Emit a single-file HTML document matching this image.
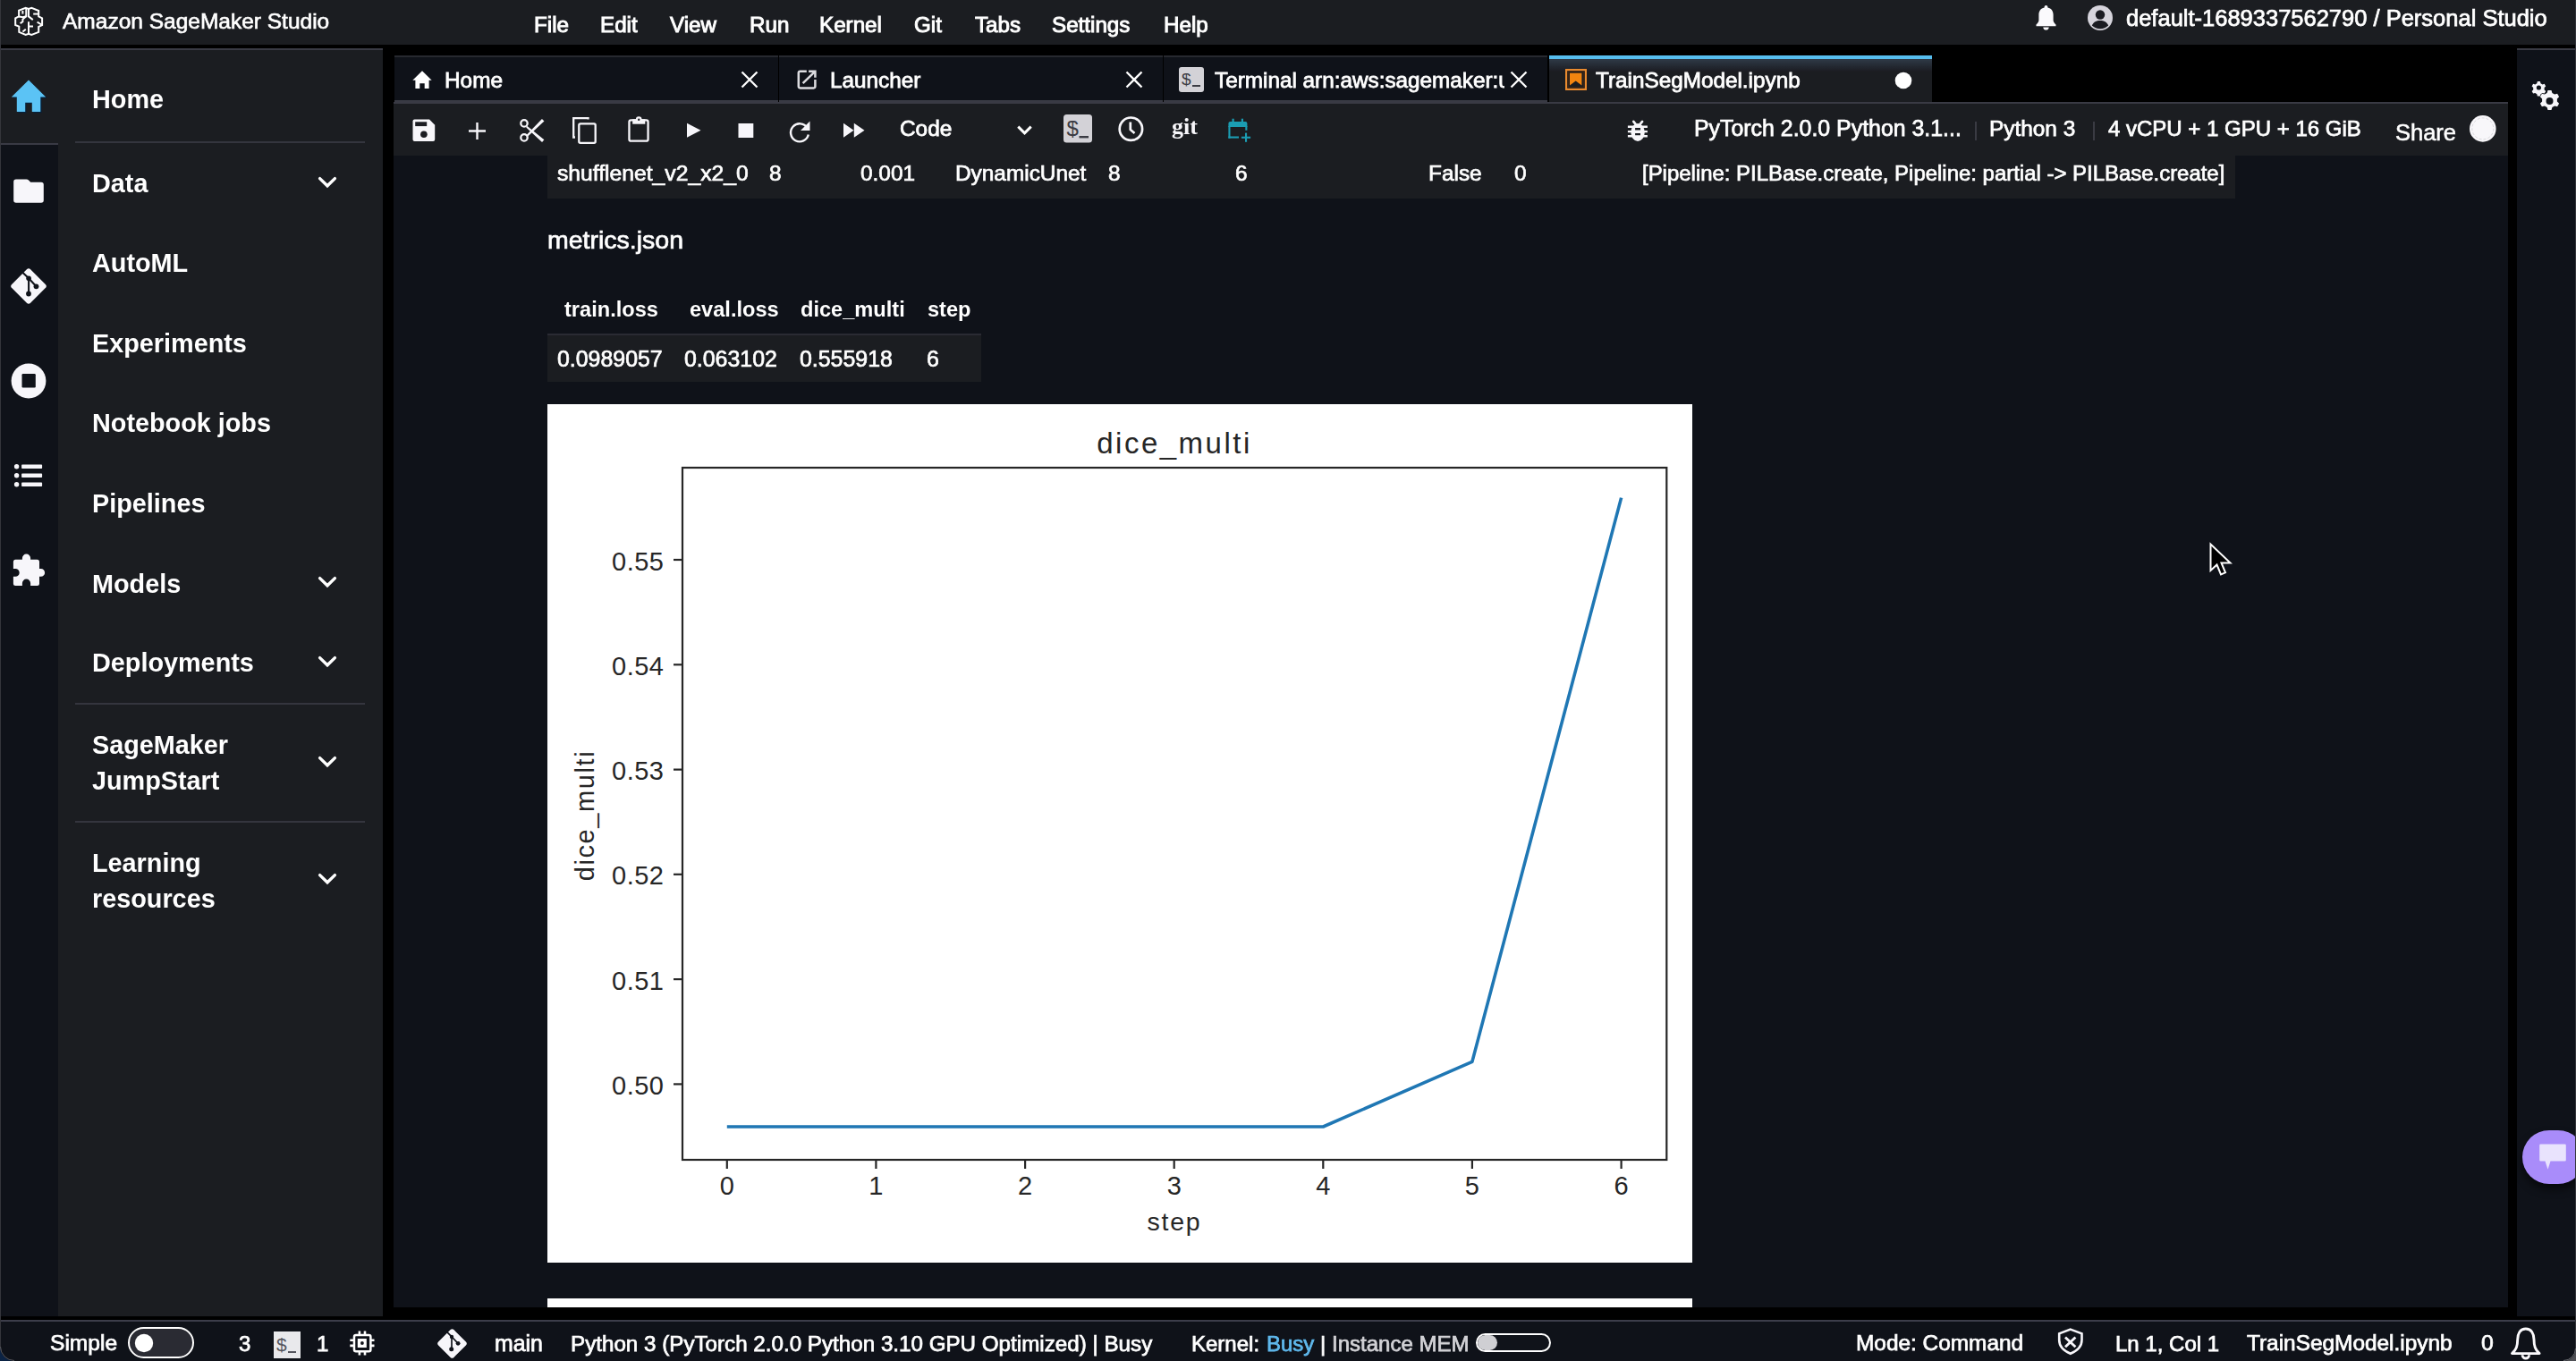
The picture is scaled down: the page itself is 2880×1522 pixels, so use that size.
<!DOCTYPE html>
<html><head><meta charset="utf-8">
<style>
*{box-sizing:border-box;margin:0;padding:0}
html,body{width:2880px;height:1522px;overflow:hidden;background:#000;font-family:"Liberation Sans",sans-serif;color:#fff}
.a{position:absolute}
.t{position:absolute;white-space:pre;line-height:1;will-change:transform}
svg{position:absolute;overflow:visible}
</style></head><body>
<div class="a" style="left:0px;top:0px;width:2880px;height:50px;background:#1b1d21;"></div>
<div class="a" style="left:0px;top:54px;width:65px;height:1418px;background:#0f1219;"></div>
<div class="a" style="left:0px;top:54px;width:65px;height:2px;background:#393a44;"></div>
<div class="a" style="left:0px;top:56px;width:65px;height:104px;background:#1b1d21;"></div>
<div class="a" style="left:0px;top:160px;width:65px;height:2px;background:#393a44;"></div>
<div class="a" style="left:65px;top:54px;width:363px;height:1418px;background:#1b1d21;"></div>
<div class="a" style="left:65px;top:54px;width:363px;height:2px;background:#393a44;"></div>
<div class="a" style="left:441px;top:62px;width:429px;height:50px;background:#0f1219;"></div>
<div class="a" style="left:441px;top:62px;width:429px;height:2px;background:#27292f;"></div>
<div class="a" style="left:441px;top:112px;width:429px;height:2px;background:#393a44;"></div>
<div class="a" style="left:871px;top:62px;width:429px;height:50px;background:#0f1219;"></div>
<div class="a" style="left:871px;top:62px;width:429px;height:2px;background:#27292f;"></div>
<div class="a" style="left:871px;top:112px;width:429px;height:2px;background:#393a44;"></div>
<div class="a" style="left:1301px;top:62px;width:429px;height:50px;background:#0f1219;"></div>
<div class="a" style="left:1301px;top:62px;width:429px;height:2px;background:#27292f;"></div>
<div class="a" style="left:1301px;top:112px;width:429px;height:2px;background:#393a44;"></div>
<div class="a" style="left:1732px;top:62px;width:428px;height:54px;background:#1b1d21;"></div>
<div class="a" style="left:1732px;top:66px;width:428px;height:14px;background:linear-gradient(#2f3a47,#1b1c22)"></div>
<div class="a" style="left:1732px;top:62px;width:428px;height:4px;background:#56bdee;"></div>
<div class="a" style="left:440px;top:114px;width:2364px;height:2px;background:#393a44;"></div>
<div class="a" style="left:440px;top:116px;width:2364px;height:58px;background:#1b1d21;"></div>
<div class="a" style="left:440px;top:174px;width:2364px;height:1288px;background:#0f1219;"></div>
<div class="a" style="left:612px;top:174px;width:1887px;height:48px;background:#1b1d21;"></div>
<div class="a" style="left:612px;top:373px;width:485px;height:54px;background:#1b1d21;"></div>
<div class="a" style="left:612px;top:373px;width:485px;height:2px;background:#2a2b33;"></div>
<div class="a" style="left:612px;top:452px;width:1280px;height:960px;background:#fff;"></div>
<div class="a" style="left:612px;top:1452px;width:1280px;height:10px;background:#fff;"></div>
<div class="a" style="left:2814px;top:54px;width:65px;height:1418px;background:#0f1219;"></div>
<div class="a" style="left:2814px;top:54px;width:65px;height:2px;background:#393a44;"></div>
<div class="a" style="left:0px;top:1476px;width:2880px;height:46px;background:#0f1219;"></div>
<div class="a" style="left:0px;top:1476px;width:2880px;height:2px;background:#3c3d4a;"></div>
<div class="a" style="left:0px;top:0px;width:1px;height:1522px;background:#34353b;z-index:50"></div>
<div class="a" style="left:2879px;top:0px;width:1px;height:1522px;background:#34353b;z-index:50"></div>
<svg style="left:0;top:1506px;z-index:60" width="16" height="16"><path d="M0 0 A16 16 0 0 0 16 16 H0 Z" fill="#0b2344"/><path d="M0.5 0 A15.5 15.5 0 0 0 16 15.5" fill="none" stroke="#55565c" stroke-width="1"/></svg>
<svg style="left:2866px;top:1508px;z-index:60" width="14" height="14"><path d="M14 0 A14 14 0 0 1 0 14 H14 Z" fill="#505156"/><path d="M13.5 0 A13.5 13.5 0 0 1 0 13.5" fill="none" stroke="#6a6b70" stroke-width="1"/></svg>
<svg style="left:14px;top:6px;" width="36" height="36" viewBox="0 0 36 36"><g fill="none" stroke="#fff" stroke-width="2" stroke-linejoin="miter" stroke-linecap="butt">
<path d="M7.1 5.8 L14.7 2.9 L18 4 L21.3 2.9 L29.2 6 V12.4 L33.1 14.3 V22.1 L29.2 23.8 V29.9 L21.3 32.9 L18 31.7 L14.7 32.9 L7.3 29.9 V23.7 L3.2 22 V14.3 L7.1 12.4 Z"/>
<path d="M18 4 V12.4 L22.8 16.1"/>
<path d="M11.4 6 V9.6"/>
<path d="M15.3 3.5 V12.2 L11.4 15.6 V18.3 L8.6 20.2"/>
<path d="M7.1 12.4 L11.6 13.2 L15.3 12.2"/>
<path d="M29.2 9.6 H23.2"/>
<path d="M27.6 18.7 L33.1 22"/>
<path d="M18 18.3 V31.7 M18 23.5 H23"/>
<path d="M11.4 29.6 L14.8 26.7"/>
</g></svg>
<div class="t" style="left:70.0px;top:12.3px;font-size:24.5px;font-weight:400;color:#fff;-webkit-text-stroke:0.65px #fff">Amazon SageMaker Studio</div>
<div class="t" style="left:597.0px;top:15.5px;font-size:24.2px;font-weight:400;color:#fff;-webkit-text-stroke:0.95px #fff">File</div>
<div class="t" style="left:671.0px;top:15.5px;font-size:24.2px;font-weight:400;color:#fff;-webkit-text-stroke:0.95px #fff">Edit</div>
<div class="t" style="left:749.0px;top:15.5px;font-size:24.2px;font-weight:400;color:#fff;-webkit-text-stroke:0.95px #fff">View</div>
<div class="t" style="left:838.0px;top:15.5px;font-size:24.2px;font-weight:400;color:#fff;-webkit-text-stroke:0.95px #fff">Run</div>
<div class="t" style="left:916.0px;top:15.5px;font-size:24.2px;font-weight:400;color:#fff;-webkit-text-stroke:0.95px #fff">Kernel</div>
<div class="t" style="left:1022.0px;top:15.5px;font-size:24.2px;font-weight:400;color:#fff;-webkit-text-stroke:0.95px #fff">Git</div>
<div class="t" style="left:1090.0px;top:15.5px;font-size:24.2px;font-weight:400;color:#fff;-webkit-text-stroke:0.95px #fff">Tabs</div>
<div class="t" style="left:1176.0px;top:15.5px;font-size:24.2px;font-weight:400;color:#fff;-webkit-text-stroke:0.95px #fff">Settings</div>
<div class="t" style="left:1301.0px;top:15.5px;font-size:24.2px;font-weight:400;color:#fff;-webkit-text-stroke:0.95px #fff">Help</div>
<svg style="left:2276px;top:6px;" width="23" height="28" viewBox="0 0 23 28"><path fill="#fbfafd" d="M11.5 0 C12.6 0 13.4 .8 13.4 1.9 V2.6 C17.5 3.4 19.6 6.6 19.6 10.6 V16.5 C19.6 18.3 20.6 20 22.5 21.5 V23.2 H0.5 V21.5 C2.4 20 3.4 18.3 3.4 16.5 V10.6 C3.4 6.6 5.5 3.4 9.6 2.6 V1.9 C9.6 .8 10.4 0 11.5 0 Z M8.3 24.4 H14.7 C14.7 26.2 13.3 27.6 11.5 27.6 C9.7 27.6 8.3 26.2 8.3 24.4 Z"/></svg>
<svg style="left:2334px;top:6px;" width="28" height="28" viewBox="0 0 28 28"><circle cx="14" cy="14" r="14" fill="#d6d4dc"/><circle cx="14" cy="10.5" r="5.2" fill="#1b1c22"/><path fill="#1b1c22" d="M4.8 22.6 C6.5 18.6 9.8 17 14 17 C18.2 17 21.5 18.6 23.2 22.6 C20.8 25 17.6 26.3 14 26.3 C10.4 26.3 7.2 25 4.8 22.6 Z"/></svg>
<div class="t" style="left:2377.0px;top:7.7px;font-size:25.5px;font-weight:400;color:#fff;-webkit-text-stroke:0.75px #fff">default-1689337562790 / Personal Studio</div>
<svg style="left:12px;top:89px;" width="40" height="38" viewBox="0 0 40 38"><path fill="#05213d" transform="translate(1.2,1.2)" d="M20 0.4 L39.2 19.6 H33.3 V35.5 Q33.3 36 32.8 36 H23.8 V25.8 H16.2 V36 H7.2 Q6.8 36 6.8 35.5 V19.6 H0.8 Z"/><path fill="#5bc3f5" d="M20 0.4 L39.2 19.6 H33.3 V35.5 Q33.3 36 32.8 36 H23.8 V25.8 H16.2 V36 H7.2 Q6.8 36 6.8 35.5 V19.6 H0.8 Z"/></svg>
<svg style="left:15px;top:200px;" width="34" height="27" viewBox="0 0 34 27"><path fill="#f7f6fa" d="M3 0.6 H14.5 Q16 0.6 17 1.6 L19.2 3.8 H31 Q33.8 3.8 33.8 6.6 V24 Q33.8 26.8 31 26.8 H3 Q0.2 26.8 0.2 24 V3.4 Q0.2 0.6 3 0.6 Z"/></svg>
<svg style="left:12px;top:300px;" width="40" height="40" viewBox="0 0 40 40"><path fill="#f7f6fa" d="M17.9 1.2 Q20 -0.9 22.1 1.2 L38.8 17.9 Q40.9 20 38.8 22.1 L22.1 38.8 Q20 40.9 17.9 38.8 L1.2 22.1 Q-0.9 20 1.2 17.9 Z"/>
<path d="M12.8 4.3 L20.1 11.3 V28.5 M20.1 11.3 L28.5 20.3" fill="none" stroke="#10131a" stroke-width="2.1"/><g fill="#10131a"><circle cx="20.1" cy="11.3" r="2.8"/><circle cx="20" cy="28.5" r="2.9"/><circle cx="28.5" cy="20.3" r="2.9"/></g></svg>
<svg style="left:12px;top:406px;" width="40" height="40" viewBox="0 0 40 40"><circle cx="20" cy="20" r="19.4" fill="#f7f6fa"/><rect x="12.5" y="12" width="15.3" height="15.5" rx="1.2" fill="#10131a"/></svg>
<svg style="left:15px;top:517px;" width="34" height="30" viewBox="0 0 34 30"><g fill="#f7f6fa"><circle cx="3.6" cy="4.8" r="2.7"/><circle cx="3.6" cy="14.8" r="2.7"/><circle cx="3.6" cy="24.8" r="2.7"/><rect x="9.1" y="2.6" width="23" height="4.5" rx="0.8"/><rect x="9.1" y="12.6" width="23" height="4.5" rx="0.8"/><rect x="9.1" y="22.6" width="23" height="4.5" rx="0.8"/></g></svg>
<svg style="left:14px;top:619px;" width="38" height="37" viewBox="0 0 38 37"><path fill="#f7f6fa" d="M3.4 6.8 H10.9 V5.2 A4.6 4.6 0 0 1 20.1 5.2 V6.8 H27.5 Q30 6.8 30 9.3 V17 H31.7 A4.4 4.4 0 0 1 31.7 25.8 H30 V33.5 Q30 36 27.5 36 H20.1 V33.2 A4.6 4.6 0 0 0 10.9 33.2 V36 H3.4 Q0.9 36 0.9 33.5 V25.8 H3.3 A4.4 4.4 0 0 0 3.3 17 H0.9 V9.3 Q0.9 6.8 3.4 6.8 Z"/></svg>
<div class="t" style="left:102.5px;top:96.6px;font-size:28.8px;font-weight:700;color:#fff;">Home</div>
<div class="t" style="left:102.5px;top:190.6px;font-size:28.8px;font-weight:700;color:#fff;">Data</div>
<div class="t" style="left:102.5px;top:279.6px;font-size:28.8px;font-weight:700;color:#fff;">AutoML</div>
<div class="t" style="left:102.5px;top:369.6px;font-size:28.8px;font-weight:700;color:#fff;">Experiments</div>
<div class="t" style="left:102.5px;top:459.1px;font-size:28.8px;font-weight:700;color:#fff;">Notebook jobs</div>
<div class="t" style="left:102.5px;top:549.2px;font-size:28.8px;font-weight:700;color:#fff;">Pipelines</div>
<div class="t" style="left:102.5px;top:638.6px;font-size:28.8px;font-weight:700;color:#fff;">Models</div>
<div class="t" style="left:102.5px;top:726.6px;font-size:28.8px;font-weight:700;color:#fff;">Deployments</div>
<div class="t" style="left:102.5px;top:819.4px;font-size:28.8px;font-weight:700;color:#fff;">SageMaker</div>
<div class="t" style="left:102.5px;top:858.6px;font-size:28.8px;font-weight:700;color:#fff;">JumpStart</div>
<div class="t" style="left:102.5px;top:951.2px;font-size:28.8px;font-weight:700;color:#fff;">Learning</div>
<div class="t" style="left:102.5px;top:990.6px;font-size:28.8px;font-weight:700;color:#fff;">resources</div>
<svg style="left:355px;top:197px;" width="22" height="14" viewBox="0 0 22 14"><path d="M2.6 2.6 L11 10.8 L19.4 2.6" fill="none" stroke="#fff" stroke-width="3.4" stroke-linecap="round" stroke-linejoin="miter"/></svg>
<svg style="left:355px;top:644px;" width="22" height="14" viewBox="0 0 22 14"><path d="M2.6 2.6 L11 10.8 L19.4 2.6" fill="none" stroke="#fff" stroke-width="3.4" stroke-linecap="round" stroke-linejoin="miter"/></svg>
<svg style="left:355px;top:733px;" width="22" height="14" viewBox="0 0 22 14"><path d="M2.6 2.6 L11 10.8 L19.4 2.6" fill="none" stroke="#fff" stroke-width="3.4" stroke-linecap="round" stroke-linejoin="miter"/></svg>
<svg style="left:355px;top:844.5px;" width="22" height="14" viewBox="0 0 22 14"><path d="M2.6 2.6 L11 10.8 L19.4 2.6" fill="none" stroke="#fff" stroke-width="3.4" stroke-linecap="round" stroke-linejoin="miter"/></svg>
<svg style="left:355px;top:976px;" width="22" height="14" viewBox="0 0 22 14"><path d="M2.6 2.6 L11 10.8 L19.4 2.6" fill="none" stroke="#fff" stroke-width="3.4" stroke-linecap="round" stroke-linejoin="miter"/></svg>
<div class="a" style="left:84px;top:158px;width:324px;height:2px;background:#34353e;"></div>
<div class="a" style="left:84px;top:786px;width:324px;height:2px;background:#34353e;"></div>
<div class="a" style="left:84px;top:918px;width:324px;height:2px;background:#34353e;"></div>
<svg style="left:461px;top:79px;" width="22" height="21" viewBox="0 0 22 21"><path fill="#fff" d="M11 0.3 L21.7 10.8 H18.6 V20 H13.7 V14.3 H8.3 V20 H3.4 V10.8 H0.3 Z"/></svg>
<div class="t" style="left:497.0px;top:77.7px;font-size:24.4px;font-weight:400;color:#fff;-webkit-text-stroke:0.80px #fff">Home</div>
<svg style="left:828px;top:79px;" width="20" height="20" viewBox="0 0 20 20"><path d="M1.5 1.5 L18.5 18.5 M18.5 1.5 L1.5 18.5" stroke="#fff" stroke-width="2.3" fill="none"/></svg>
<svg style="left:1258px;top:79px;" width="20" height="20" viewBox="0 0 20 20"><path d="M1.5 1.5 L18.5 18.5 M18.5 1.5 L1.5 18.5" stroke="#fff" stroke-width="2.3" fill="none"/></svg>
<svg style="left:1688px;top:79px;" width="20" height="20" viewBox="0 0 20 20"><path d="M1.5 1.5 L18.5 18.5 M18.5 1.5 L1.5 18.5" stroke="#fff" stroke-width="2.3" fill="none"/></svg>
<svg style="left:890px;top:77px;" width="24" height="24" viewBox="0 0 24 24"><g fill="none" stroke="#dcdce0" stroke-width="2.5"><path d="M11.8 2.8 H4.6 Q2.8 2.8 2.8 4.6 V19.6 Q2.8 21.4 4.6 21.4 H19.6 Q21.4 21.4 21.4 19.6 V12.1"/><path d="M14.1 2.8 H21.4 V9.8"/><path d="M7.6 16.2 L20.5 3.7"/></g></svg>
<div class="t" style="left:928.0px;top:77.8px;font-size:24.3px;font-weight:400;color:#fff;-webkit-text-stroke:0.80px #fff">Launcher</div>
<svg style="left:1318px;top:75px;" width="28" height="28" viewBox="0 0 28 28"><rect x="0" y="0" width="28" height="28" rx="3" fill="#d3d2d7"/><text x="3" y="20" font-family="Liberation Sans" font-size="19" fill="#3b3c44">$</text><rect x="15" y="20" width="9" height="2" fill="#3b3c44"/></svg>
<div class="a" style="left:1357px;top:70px;width:325px;height:36px;overflow:hidden">
<div class="t" style="left:1.0px;top:7.8px;font-size:24.3px;font-weight:400;color:#fff;-webkit-text-stroke:0.80px #fff">Terminal arn:aws:sagemaker:us-east-1</div>
</div>
<svg style="left:1750px;top:77px;" width="24" height="24" viewBox="0 0 24 24"><rect x="1.1" y="1.1" width="21.8" height="21.8" fill="none" stroke="#e98a2e" stroke-width="2.2"/><rect x="3.3" y="3.3" width="17.4" height="17.4" fill="none" stroke="#3a2414" stroke-width="1.4"/><path fill="#f3850f" d="M5 4.8 H18.4 V18.4 L11.7 13.4 L5 18.4 Z"/></svg>
<div class="t" style="left:1784.0px;top:77.8px;font-size:24.3px;font-weight:400;color:#fff;-webkit-text-stroke:0.80px #fff">TrainSegModel.ipynb</div>
<svg style="left:2118px;top:80px;" width="20" height="20" viewBox="0 0 20 20"><circle cx="10" cy="10" r="9.3" fill="#fff"/></svg>
<svg style="left:461px;top:133px;" width="26" height="26" viewBox="0 0 26 26"><path fill="#f7f6fa" d="M2.5 0.5 H19 L25.2 6.7 V23 Q25.2 25 23.2 25 H2.5 Q0.5 25 0.5 23 V2.5 Q0.5 0.5 2.5 0.5 Z"/><rect x="3.2" y="3.3" width="13" height="4.8" fill="#1b1c22"/><circle cx="12.9" cy="17.3" r="3.8" fill="#1b1c22"/></svg>
<svg style="left:523px;top:136px;" width="21" height="21" viewBox="0 0 21 21"><path d="M10.5 1 V20 M1 10.5 H20" stroke="#f7f6fa" stroke-width="2.4" fill="none"/></svg>
<svg style="left:579px;top:132px;" width="30" height="28" viewBox="0 0 30 28"><g fill="none" stroke="#f7f6fa" stroke-width="2.3"><circle cx="7" cy="5.9" r="3.7"/><circle cx="7" cy="21.9" r="3.7"/></g><path fill="#f7f6fa" d="M10.2 8.8 L29.36 24.32 L27.04 27.08 L9.2 10.6 Z M9.6 19 L26.95 1.01 L29.45 3.59 L11.2 20.6 Z"/></svg>
<svg style="left:640px;top:131px;" width="27" height="30" viewBox="0 0 27 30"><g fill="none" stroke="#f7f6fa" stroke-width="2.3"><path d="M17.5 2.5 V1.2 H1.2 V22.5 H3"/><rect x="7.3" y="7.3" width="18.4" height="21.5" rx="1.6"/></g></svg>
<svg style="left:701px;top:129px;" width="26" height="32" viewBox="0 0 26 32"><rect x="2.45" y="5.35" width="21.1" height="23.3" rx="2" fill="none" stroke="#f7f6fa" stroke-width="2.3"/><path fill="#f7f6fa" d="M6.2 4.3 H20.3 V9.7 H6.2 Z"/><circle cx="13.2" cy="4.6" r="3.3" fill="#f7f6fa"/><circle cx="13.2" cy="4.8" r="1.2" fill="#1b1c22"/></svg>
<svg style="left:767px;top:137px;" width="18" height="18" viewBox="0 0 18 18"><path fill="#f7f6fa" d="M1 0.8 L16.5 8.8 L1 16.8 Z"/></svg>
<svg style="left:825px;top:137px;" width="18" height="18" viewBox="0 0 18 18"><rect x="0.5" y="1" width="16.8" height="16" fill="#f7f6fa"/></svg>
<svg style="left:882px;top:135px;" width="26" height="25" viewBox="0 0 26 25"><path fill="none" stroke="#f7f6fa" stroke-width="2.4" d="M20.5 8 A10 10 0 1 0 21.8 15.5"/><path fill="#f7f6fa" d="M23.5 0.5 V11 H13 Z"/></svg>
<svg style="left:942px;top:137px;" width="26" height="18" viewBox="0 0 26 18"><path fill="#f7f6fa" d="M1 0.8 L12.5 8.8 L1 16.8 Z M12.8 0.8 L24.5 8.8 L12.8 16.8 Z"/></svg>
<div class="t" style="left:1006.3px;top:132.3px;font-size:24.4px;font-weight:400;color:#fff;-webkit-text-stroke:0.80px #fff">Code</div>
<svg style="left:1136px;top:139px;" width="19" height="14" viewBox="0 0 19 14"><path d="M2.3 2.6 L9.5 9.9 L16.7 2.6" fill="none" stroke="#fff" stroke-width="3" stroke-linecap="butt"/></svg>
<svg style="left:1189px;top:128px;" width="32" height="32" viewBox="0 0 32 32"><rect x="0" y="0" width="32" height="31.5" rx="3.5" fill="#d3d2d7"/><text x="3.5" y="24" font-family="Liberation Sans" font-size="24" fill="#3b3c44">$</text><rect x="17.5" y="24" width="10.5" height="2.4" fill="#3b3c44"/></svg>
<svg style="left:1250px;top:130px;" width="29" height="29" viewBox="0 0 29 29"><circle cx="14.4" cy="14.2" r="12.7" fill="none" stroke="#f7f6fa" stroke-width="2.7"/><path d="M13.8 6.5 V15 L18.5 19" fill="none" stroke="#f7f6fa" stroke-width="2.7"/></svg>
<div class="t" style="left:1310.0px;top:129.0px;font-size:26px;font-weight:700;color:#f7f6fa;font-family:Liberation Serif,serif">git</div>
<svg style="left:1371px;top:131px;" width="30" height="30" viewBox="0 0 30 30"><g fill="#1b9db3"><path d="M2.4 7 Q2.4 5 4.4 5 H21.4 Q23.4 5 23.4 7 V11 H2.4 Z"/><rect x="6.5" y="1.7" width="2.2" height="4"/><rect x="16.8" y="1.7" width="2.2" height="4"/><rect x="2.4" y="10" width="2.1" height="13.6"/><rect x="2.4" y="21.5" width="11.6" height="2.1"/><rect x="21.3" y="10" width="2.1" height="4.8"/><rect x="16.9" y="21.7" width="10.2" height="2.1"/><rect x="21" y="17.6" width="2.1" height="10.2"/></g></svg>
<svg style="left:1819px;top:134px;" width="24" height="25" viewBox="0 0 24 25"><g fill="#f7f6fa"><ellipse cx="12.05" cy="14" rx="7.7" ry="9.9"/><path d="M0.9 6.6 H22.9 V8.9 H0.9 Z M0.9 11.9 H22.9 V14.2 H0.9 Z M0.9 17.1 H22.9 V19.4 H0.9 Z"/></g><path d="M7.3 1.9 L9.6 4.8 M17.1 1.9 L14.6 4.8" stroke="#f7f6fa" stroke-width="2.7" stroke-linecap="round"/><path d="M9.1 9.1 H15 V11.5 H9.1 Z M9.1 14.9 H15 V17.3 H9.1 Z" fill="#1b1c22"/></svg>
<div class="t" style="left:1894.0px;top:131.3px;font-size:24.9px;font-weight:400;color:#fff;-webkit-text-stroke:0.75px #fff">PyTorch 2.0.0 Python 3.1...</div>
<div class="a" style="left:2208px;top:136px;width:2px;height:21px;background:#3a3b43;"></div>
<div class="t" style="left:2224.0px;top:131.7px;font-size:24.4px;font-weight:400;color:#fff;-webkit-text-stroke:0.75px #fff">Python 3</div>
<div class="a" style="left:2340px;top:136px;width:2px;height:21px;background:#3a3b43;"></div>
<div class="t" style="left:2357.0px;top:132.1px;font-size:24px;font-weight:400;color:#fff;-webkit-text-stroke:0.75px #fff">4 vCPU + 1 GPU + 16 GiB</div>
<div class="t" style="left:2678.0px;top:135.6px;font-size:25.5px;font-weight:400;color:#fff;-webkit-text-stroke:0.55px #fff">Share</div>
<svg style="left:2760px;top:128px;" width="32" height="32" viewBox="0 0 32 32"><circle cx="15.8" cy="15.9" r="14.8" fill="#f8f7fa"/><circle cx="15.8" cy="15.9" r="12" fill="none" stroke="#cfcfd4" stroke-width="0.8" stroke-dasharray="3 2"/></svg>
<svg style="left:2826px;top:88px;" width="40" height="40" viewBox="0 0 40 40"><g fill="#f7f6fa"><path d="M10.9 3 h3 l.6 2.2 l2 1.2 l2.2-.6 l1.5 2.6 l-1.6 1.6 v2.4 l1.6 1.6 l-1.5 2.6 l-2.2-.6 l-2 1.2 l-.6 2.2 h-3 l-.6-2.2 l-2-1.2 l-2.2.6 l-1.5-2.6 l1.6-1.6 v-2.4 l-1.6-1.6 l1.5-2.6 l2.2.6 l2-1.2 Z"/><path d="M22.5 13 h4 l.9 3 l2.7 1.6 l3-.8 l2 3.4 l-2.2 2.2 v3.2 l2.2 2.2 l-2 3.4 l-3-.8 l-2.7 1.6 l-.9 3 h-4 l-.9-3 l-2.7-1.6 l-3 .8 l-2-3.4 l2.2-2.2 v-3.2 l-2.2-2.2 l2-3.4 l3 .8 l2.7-1.6 Z"/></g><circle cx="12.4" cy="10" r="2.6" fill="#10131a"/><circle cx="24.5" cy="25" r="4" fill="#10131a"/></svg>
<div class="t" style="left:623.0px;top:181.6px;font-size:24.7px;font-weight:400;color:#fff;-webkit-text-stroke:0.70px #fff">shufflenet_v2_x2_0</div>
<div class="t" style="left:860.0px;top:181.8px;font-size:24.4px;font-weight:400;color:#fff;-webkit-text-stroke:0.70px #fff">8</div>
<div class="t" style="left:962.0px;top:181.8px;font-size:24.4px;font-weight:400;color:#fff;-webkit-text-stroke:0.70px #fff">0.001</div>
<div class="t" style="left:1068.0px;top:181.8px;font-size:24.4px;font-weight:400;color:#fff;-webkit-text-stroke:0.70px #fff">DynamicUnet</div>
<div class="t" style="left:1239.0px;top:181.8px;font-size:24.4px;font-weight:400;color:#fff;-webkit-text-stroke:0.70px #fff">8</div>
<div class="t" style="left:1381.0px;top:181.8px;font-size:24.4px;font-weight:400;color:#fff;-webkit-text-stroke:0.70px #fff">6</div>
<div class="t" style="left:1597.0px;top:181.8px;font-size:24.4px;font-weight:400;color:#fff;-webkit-text-stroke:0.70px #fff">False</div>
<div class="t" style="left:1693.0px;top:181.8px;font-size:24.4px;font-weight:400;color:#fff;-webkit-text-stroke:0.70px #fff">0</div>
<div class="t" style="left:1836.0px;top:182.2px;font-size:23.95px;font-weight:400;color:#fff;-webkit-text-stroke:0.70px #fff">[Pipeline: PILBase.create, Pipeline: partial -&gt; PILBase.create]</div>
<div class="t" style="left:612.0px;top:253.9px;font-size:28.5px;font-weight:400;color:#fff;-webkit-text-stroke:0.70px #fff">metrics.json</div>
<div class="t" style="left:631.0px;top:335.0px;font-size:23.6px;font-weight:700;color:#fff;">train.loss</div>
<div class="t" style="left:771.0px;top:335.0px;font-size:23.6px;font-weight:700;color:#fff;">eval.loss</div>
<div class="t" style="left:895.0px;top:335.0px;font-size:23.6px;font-weight:700;color:#fff;">dice_multi</div>
<div class="t" style="left:1037.0px;top:335.0px;font-size:23.6px;font-weight:700;color:#fff;">step</div>
<div class="t" style="left:623.0px;top:388.9px;font-size:24.9px;font-weight:400;color:#fff;-webkit-text-stroke:0.70px #fff">0.0989057</div>
<div class="t" style="left:765.0px;top:388.9px;font-size:24.9px;font-weight:400;color:#fff;-webkit-text-stroke:0.70px #fff">0.063102</div>
<div class="t" style="left:894.0px;top:388.9px;font-size:24.9px;font-weight:400;color:#fff;-webkit-text-stroke:0.70px #fff">0.555918</div>
<div class="t" style="left:1036.0px;top:388.9px;font-size:24.9px;font-weight:400;color:#fff;-webkit-text-stroke:0.70px #fff">6</div>
<svg style="left:612px;top:452px;" width="1280" height="960" viewBox="0 0 1280 960"><rect x="151" y="71" width="1100.3" height="774" fill="none" stroke="#262626" stroke-width="2.2"/><path d="M141 760.4 H151" stroke="#262626" stroke-width="2.2"/><text x="130.5" y="771.9" text-anchor="end" font-family="Liberation Sans" font-size="29" fill="#262626" style="letter-spacing:0.5px">0.50</text><path d="M141 643.1 H151" stroke="#262626" stroke-width="2.2"/><text x="130.5" y="654.6" text-anchor="end" font-family="Liberation Sans" font-size="29" fill="#262626" style="letter-spacing:0.5px">0.51</text><path d="M141 525.8 H151" stroke="#262626" stroke-width="2.2"/><text x="130.5" y="537.3" text-anchor="end" font-family="Liberation Sans" font-size="29" fill="#262626" style="letter-spacing:0.5px">0.52</text><path d="M141 408.6 H151" stroke="#262626" stroke-width="2.2"/><text x="130.5" y="420.1" text-anchor="end" font-family="Liberation Sans" font-size="29" fill="#262626" style="letter-spacing:0.5px">0.53</text><path d="M141 291.3 H151" stroke="#262626" stroke-width="2.2"/><text x="130.5" y="302.8" text-anchor="end" font-family="Liberation Sans" font-size="29" fill="#262626" style="letter-spacing:0.5px">0.54</text><path d="M141 174.0 H151" stroke="#262626" stroke-width="2.2"/><text x="130.5" y="185.5" text-anchor="end" font-family="Liberation Sans" font-size="29" fill="#262626" style="letter-spacing:0.5px">0.55</text><path d="M200.8 845 V855" stroke="#262626" stroke-width="2.2"/><text x="200.8" y="884" text-anchor="middle" font-family="Liberation Sans" font-size="29" fill="#262626">0</text><path d="M367.4 845 V855" stroke="#262626" stroke-width="2.2"/><text x="367.4" y="884" text-anchor="middle" font-family="Liberation Sans" font-size="29" fill="#262626">1</text><path d="M534.1 845 V855" stroke="#262626" stroke-width="2.2"/><text x="534.1" y="884" text-anchor="middle" font-family="Liberation Sans" font-size="29" fill="#262626">2</text><path d="M700.7 845 V855" stroke="#262626" stroke-width="2.2"/><text x="700.7" y="884" text-anchor="middle" font-family="Liberation Sans" font-size="29" fill="#262626">3</text><path d="M867.3 845 V855" stroke="#262626" stroke-width="2.2"/><text x="867.3" y="884" text-anchor="middle" font-family="Liberation Sans" font-size="29" fill="#262626">4</text><path d="M1033.9 845 V855" stroke="#262626" stroke-width="2.2"/><text x="1033.9" y="884" text-anchor="middle" font-family="Liberation Sans" font-size="29" fill="#262626">5</text><path d="M1200.6 845 V855" stroke="#262626" stroke-width="2.2"/><text x="1200.6" y="884" text-anchor="middle" font-family="Liberation Sans" font-size="29" fill="#262626">6</text><polyline points="200.8,808.0 367.4,808.0 534.1,808.0 700.7,808.0 867.3,808.0 1033.9,735.4 1200.6,104.6" fill="none" stroke="#1f77b4" stroke-width="3.6" stroke-linejoin="round"/><text x="701" y="54.60000000000002" text-anchor="middle" font-family="Liberation Sans" font-size="33" fill="#262626" style="letter-spacing:2.5px">dice_multi</text><text x="701" y="923.5" text-anchor="middle" font-family="Liberation Sans" font-size="28.5" fill="#262626" style="letter-spacing:1.8px">step</text><text transform="translate(52,460) rotate(-90)" text-anchor="middle" font-family="Liberation Sans" font-size="29" fill="#262626" style="letter-spacing:1.6px">dice_multi</text></svg>
<svg style="left:2470px;top:607px;" width="26" height="40" viewBox="0 0 26 40"><path d="M1.5 1.5 V31 L8.5 24.5 L13 35.5 L18 33.3 L13.5 22.5 H23.5 Z" fill="#000" stroke="#fff" stroke-width="2" stroke-linejoin="miter"/></svg>
<div class="a" style="left:2820px;top:1264px;width:70px;height:60px;border-radius:30px;background:#a98cfa;box-shadow:0 6px 10px rgba(0,0,0,.55)"></div>
<svg style="left:2839px;top:1279px;" width="31" height="30" viewBox="0 0 31 30"><path fill="#e9e3fd" d="M1.5 0.5 H28.5 Q29.8 0.5 29.8 1.8 V18.2 Q29.8 19.5 28.5 19.5 H12.5 L9.5 28.8 L6.5 19.5 H1.5 Q0.2 19.5 0.2 18.2 V1.8 Q0.2 0.5 1.5 0.5 Z"/></svg>
<div class="t" style="left:56.0px;top:1490.2px;font-size:24.6px;font-weight:400;color:#fff;-webkit-text-stroke:0.75px #fff">Simple</div>
<div class="a" style="left:143px;top:1484px;width:74px;height:35px;border-radius:18px;border:2px solid #fff;background:#2a2b33"></div>
<svg style="left:150px;top:1491px;" width="22" height="22" viewBox="0 0 22 22"><circle cx="11" cy="11" r="10.2" fill="#fff"/></svg>
<div class="t" style="left:267.0px;top:1490.7px;font-size:24px;font-weight:400;color:#fff;-webkit-text-stroke:0.75px #fff">3</div>
<svg style="left:306px;top:1489px;" width="30" height="30" viewBox="0 0 30 30"><rect x="0" y="0" width="30" height="30" fill="#e9e9ec"/><text x="3" y="22" font-family="Liberation Sans" font-size="21" fill="#55565e">$</text><rect x="16" y="22" width="9" height="2" fill="#55565e"/></svg>
<div class="t" style="left:354.0px;top:1490.7px;font-size:24px;font-weight:400;color:#fff;-webkit-text-stroke:0.75px #fff">1</div>
<svg style="left:390px;top:1487px;" width="30" height="30" viewBox="0 0 30 30"><rect x="5.98" y="5.92" width="18.4" height="18.4" rx="2" fill="none" stroke="#fff" stroke-width="2.5"/><rect x="9.8" y="10" width="10" height="10" fill="#fff"/><circle cx="14.9" cy="15" r="1.9" fill="#10131a"/><path d="M11.9 1.5 V5 M18 1.5 V5 M11.9 25 V28.5 M18 25 V28.5 M1.3 11.8 H5 M1.3 17.9 H5 M25 11.8 H28.5 M25 17.9 H28.5" stroke="#fff" stroke-width="2.6"/></svg>
<svg style="left:489px;top:1486px;" width="33" height="33" viewBox="0 0 33 33"><path fill="#f7f6fa" d="M14.6 1.1 Q16.5 -0.8 18.4 1.1 L31.9 14.6 Q33.8 16.5 31.9 18.4 L18.4 31.9 Q16.5 33.8 14.6 31.9 L1.1 18.4 Q-0.8 16.5 1.1 14.6 Z"/><path d="M10.6 3.4 L16 8.9 V22.8 M16 8.9 L23.1 16.3" fill="none" stroke="#10131a" stroke-width="1.7"/><g fill="#10131a"><circle cx="16" cy="8.9" r="2.2"/><circle cx="15.7" cy="22.8" r="2.5"/><circle cx="23.1" cy="16.3" r="2.4"/></g></svg>
<div class="t" style="left:553.0px;top:1489.9px;font-size:24.9px;font-weight:400;color:#fff;-webkit-text-stroke:0.75px #fff">main</div>
<div class="t" style="left:638.0px;top:1490.5px;font-size:24.2px;font-weight:400;color:#fff;-webkit-text-stroke:0.75px #fff">Python 3 (PyTorch 2.0.0 Python 3.10 GPU Optimized) | Busy</div>
<div class="t" style="left:1332.0px;top:1490.7px;font-size:24px;font-weight:400;color:#fff;-webkit-text-stroke:0.75px #fff">Kernel:</div>
<div class="t" style="left:1416.0px;top:1490.7px;font-size:24px;font-weight:400;color:#5fb8ec;-webkit-text-stroke:0.75px #5fb8ec">Busy</div>
<div class="t" style="left:1475.5px;top:1490.7px;font-size:24px;font-weight:400;color:#fff;-webkit-text-stroke:0.75px #fff">|</div>
<div class="t" style="left:1489.0px;top:1490.7px;font-size:24px;font-weight:400;color:#d2d2d6;-webkit-text-stroke:0.75px #d2d2d6">Instance MEM</div>
<div class="a" style="left:1650px;top:1491px;width:84px;height:21px;border-radius:11px;border:2px solid #fff;background:#10131a;overflow:hidden"><div style="position:absolute;left:0;top:0;width:22px;height:17px;border-radius:9px;background:#cfcfd3"></div></div>
<div class="t" style="left:2075.0px;top:1490.3px;font-size:24.4px;font-weight:400;color:#fff;-webkit-text-stroke:0.75px #fff">Mode: Command</div>
<svg style="left:2299px;top:1485px;" width="31" height="31" viewBox="0 0 31 31"><path fill="none" stroke="#f7f6fa" stroke-width="2.6" d="M15.8 1.6 L28.5 6.3 V13.5 Q28.5 23.5 15.8 28.8 Q3.2 23.5 3.2 13.5 V6.3 Z"/><path d="M10 10.5 L21.4 21.2 M21.4 10.5 L10 21.2" stroke="#f7f6fa" stroke-width="2.9"/></svg>
<div class="t" style="left:2365.0px;top:1490.7px;font-size:24px;font-weight:400;color:#fff;-webkit-text-stroke:0.75px #fff">Ln 1, Col 1</div>
<div class="t" style="left:2512.0px;top:1490.3px;font-size:24.4px;font-weight:400;color:#fff;-webkit-text-stroke:0.75px #fff">TrainSegModel.ipynb</div>
<div class="t" style="left:2774.0px;top:1490.0px;font-size:24.8px;font-weight:400;color:#fff;-webkit-text-stroke:0.75px #fff">0</div>
<svg style="left:2806px;top:1484px;" width="36" height="36" viewBox="0 0 36 36"><path fill="none" stroke="#fbfafd" stroke-width="2.9" stroke-linejoin="round" d="M17.8 2 C11.5 2 8.8 7.5 8.7 14 C8.6 21 7.5 25 2.5 29.6 H33.1 C28.1 25 27.1 21 27 14 C26.9 7.5 24.1 2 17.8 2 Z"/><path fill="none" stroke="#fbfafd" stroke-width="2.8" d="M14 31.2 A3.8 3.8 0 0 0 21.6 31.2"/></svg>
</body></html>
